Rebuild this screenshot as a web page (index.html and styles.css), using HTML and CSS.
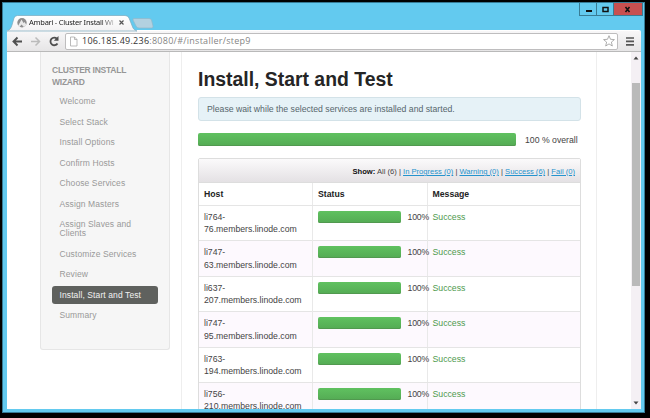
FILE: index.html
```html
<!DOCTYPE html>
<html lang="en">
<head>
<meta charset="utf-8">
<title>Ambari - Cluster Install Wizard</title>
<link rel="stylesheet" href="styles.css">
</head>
<body>
<div class="window">
  <header class="titlebar">
    <svg class="tab-shape" width="150" height="17" viewBox="0 0 150 17">
      <defs><linearGradient id="tab" x1="0" y1="0" x2="0" y2="1"><stop offset="0" stop-color="#fff"/><stop offset="1" stop-color="#f3f2f3"/></linearGradient></defs>
      <path d="M0 16C3 15 4 13 5 10L7 3Q8 .5 10.500 .5H118Q121 .5 122 3L126 13Q127 15 130 16Z" fill="url(#tab)" stroke="#79a9bd" stroke-width=".7"/>
      <path d="M127 3.500H142Q144 3.500 144.500 5L146 11Q146.500 13 144.500 13H132Q130 13 129 11L126 5Q125.500 3.500 127 3.500Z" fill="#b2d1e0" stroke="#8fb8ca" stroke-width=".7"/>
      <circle cx="15" cy="7.800" r="4.700" fill="#8d8d8d"/>
      <path d="M11 11L14.500 4.500L16.500 8L17.500 7L19.500 10L17 12L14.500 9.500L12.500 12Z" fill="#e9e9e9"/>
      <path d="M112.500 5.500L116.500 9.500M116.500 5.500L112.500 9.500" stroke="#555" stroke-width="1.200"/>
    </svg>
    <span class="tab-title">Ambari - Cluster Install Wi</span>
    <div class="controls">
      <span><svg width="17" height="13"><path d="M6 8H12" stroke="#111" stroke-width="2"/></svg></span>
      <span><svg width="17" height="13"><rect x="6" y="4.500" width="5" height="4" fill="none" stroke="#111" stroke-width="1.500"/></svg></span>
      <span class="close"><svg width="28" height="13"><path d="M11.500 4L15.500 9M15.500 4L11.500 9" stroke="#111" stroke-width="1.600"/></svg></span>
    </div>
  </header>
  <div class="toolbar">
    <svg class="nav" width="58" height="21" viewBox="0 0 58 21" fill="none">
      <path d="M15 10.500H7M10.500 6.500L6.500 10.500L10.500 14.500" stroke="#4f4f4f" stroke-width="1.900"/>
      <path d="M24 10.500H32M28.500 6.500L32.500 10.500L28.500 14.500" stroke="#bbb" stroke-width="1.500"/>
      <path d="M50 7.800A3.800 3.800 0 1 0 50.500 12.500" stroke="#4f4f4f" stroke-width="1.800"/>
      <path d="M51.500 5V9.700H46.800Z" fill="#4f4f4f"/>
    </svg>
    <div class="address">
      <svg width="8" height="11" viewBox="0 0 8 11"><path d="M.5 1H4.500L7 3.500V10H.5ZM4.500 1V3.500H7" fill="#fff" stroke="#aaa" stroke-width=".8"/></svg>
      <span class="url"><b>106.185.49.236</b>:8080/#/installer/step9</span>
      <svg width="12" height="12" viewBox="0 0 12 12"><path d="M6 .7L7.500 4.300L11.400 4.600L8.400 7.100L9.300 11L6 8.900L2.700 11L3.600 7.100L.6 4.600L4.500 4.300Z" fill="#fff" stroke="#999" stroke-width=".8"/></svg>
    </div>
    <svg class="burger" width="8" height="9"><path d="M0 1H8M0 4.400H8M0 7.800H8" stroke="#555" stroke-width="1.700"/></svg>
  </div>
  <div class="viewport">
    <div class="page">
      <nav class="sidebar">
        <h2>CLUSTER INSTALL<br>WIZARD</h2>
        <ul>
          <li>Welcome</li><li>Select Stack</li><li>Install Options</li><li>Confirm Hosts</li><li>Choose Services</li><li>Assign Masters</li><li>Assign Slaves and<br>Clients</li><li>Customize Services</li><li>Review</li><li class="active">Install, Start and Test</li><li>Summary</li>
        </ul>
      </nav>
      <main>
        <h1>Install, Start and Test</h1>
        <p class="info">Please wait while the selected services are installed and started.</p>
        <div class="overall"><div class="bar"></div><span>100 % overall</span></div>
        <section class="hosts">
          <div class="filter"><b>Show:</b> All (6) | <a>In Progress (0)</a> | <a>Warning (0)</a> | <a>Success (6)</a> | <a>Fail (0)</a></div>
          <div class="row head"><div>Host</div><div>Status</div><div>Message</div></div>
          <div class="row"><div>li764-<br>76.members.linode.com</div><div class="status"><i class="bar"></i><span>100%</span></div><div class="ok">Success</div></div>
          <div class="row odd"><div>li747-<br>63.members.linode.com</div><div class="status"><i class="bar"></i><span>100%</span></div><div class="ok">Success</div></div>
          <div class="row"><div>li637-<br>207.members.linode.com</div><div class="status"><i class="bar"></i><span>100%</span></div><div class="ok">Success</div></div>
          <div class="row odd"><div>li747-<br>95.members.linode.com</div><div class="status"><i class="bar"></i><span>100%</span></div><div class="ok">Success</div></div>
          <div class="row"><div>li763-<br>194.members.linode.com</div><div class="status"><i class="bar"></i><span>100%</span></div><div class="ok">Success</div></div>
          <div class="row odd"><div>li756-<br>210.members.linode.com</div><div class="status"><i class="bar"></i><span>100%</span></div><div class="ok">Success</div></div>
        </section>
      </main>
    </div>
    <div class="scrollbar">
      <svg width="6" height="4"><path d="M.5 3.500H5.500L3 .5Z" fill="#444"/></svg>
      <div class="thumb"></div>
      <svg width="6" height="4"><path d="M.5 .5H5.500L3 3.500Z" fill="#444"/></svg>
    </div>
  </div>
</div>
</body>
</html>
```
FILE: styles.css
```css
* { box-sizing: border-box; }
body { margin: 0; width: 650px; height: 418px; overflow: hidden; background: #000; font-family: "Liberation Sans", Arial, sans-serif; padding: 2px 5px 5px 2px; }
.window { width: 643px; height: 411px; background: #63caef; border: 1px solid #367b96; padding: 0 3px 3px 4px; }
.titlebar { height: 27px; position: relative; display: flex; justify-content: space-between; }
.tab-shape { margin-top: 12px; flex: none; }
.tab-title { position: absolute; left: 22px; top: 13px; white-space: nowrap; font: 7.500px/13px "Noto Sans", sans-serif; letter-spacing: -.25px; color: #222; -webkit-mask-image: linear-gradient(to right, #000 85%, rgba(0,0,0,.25)); mask-image: linear-gradient(to right, #000 85%, rgba(0,0,0,.25)); }
.controls { display: flex; height: 13px; margin-right: -2px; border: 1px solid #397c95; border-top: 0; }
.controls span { height: 12px; width: 17px; border-right: 1px solid #397c95; }
.controls .close { width: 28px; border: 0; background: #c75050; }
.controls svg { display: block; }
.toolbar { height: 22px; background: linear-gradient(#f8f7f8, #e6e5e6); border-top: 1px solid #fff; border-bottom: 1px solid #b9b9b9; display: flex; align-items: center; border-radius: 0 2px 0 0; }
.nav { flex: none; }
.address { width: 553px; height: 17px; border: 1px solid #bebdbe; border-radius: 2px; background: #fff; display: flex; align-items: center; padding: 0 2px 0 4px; gap: 4px; }
.url { flex: 1; font: 9px/14px "Open Sans", sans-serif; letter-spacing: .26px; color: #858585; }
.url b { color: #333; font-weight: 400; }
.burger { margin-left: 8px; }
.viewport { height: 357px; background: #fff; display: flex; overflow: hidden; }
.page { width: 624px; height: 357px; display: flex; align-items: flex-start; padding-left: 33px; }
.sidebar { width: 130px; height: 298px; background: #f6f6f6; border: 1px solid #e6e6e6; border-top: 0; border-radius: 0 0 3px 3px; padding: 12px 11px; color: #999; font-size: 8.500px; }
.sidebar h2 { margin: 0 0 3.900px; font-size: 8.500px; letter-spacing: -.24px; line-height: 12.300px; color: #969696; }
ul { list-style: none; margin: 0; padding: 0; }
li { padding: 4.800px 7.500px; margin-bottom: 2px; line-height: 8.900px; letter-spacing: .1px; white-space: nowrap; }
li.active { background: #5f615e; color: #f2f2f2; border-radius: 3px; }
main { margin-left: 11px; width: 416px; height: 357px; border: solid #eee; border-width: 0 1px; padding: 15px 15px 0 16px; font-size: 8.700px; color: #444; }
h1 { margin: 0; font-size: 19.400px; line-height: 24px; color: #252525; white-space: nowrap; }
.info { margin: 6px 0 12px; height: 24px; line-height: 23px; background: #e6f2f7; border: 1px solid #d3e2e8; border-radius: 3px; padding-left: 8px; color: #56666c; }
.overall { display: flex; align-items: center; gap: 9px; height: 13px; white-space: nowrap; }
.bar { display: block; height: 12px; border-radius: 2px; background: linear-gradient(#60c160, #54ab54); box-shadow: inset 0 -1px #51994f; }
.overall .bar { width: 318px; height: 12.500px; }
.hosts { margin-top: 12px; border: 1px solid #ddd; border-radius: 2px 2px 0 0; }
.filter { height: 24px; line-height: 25px; font-size: 7.600px; text-align: right; padding-right: 5px; white-space: nowrap; background: linear-gradient(#fbfafb, #e4e1e4); border-bottom: 1px solid #ddd; }
.filter b { color: #111; }
.filter a { color: #2593cd; text-decoration: underline; }
.row { display: grid; grid-template-columns: 114px 114.500px 1fr; height: 35.400px; border-bottom: 1px solid #e5e5e5; line-height: 12.400px; white-space: nowrap; }
.row > div { padding: 5px; border-right: 1px solid #e9e9e9; }
.row > div:last-child { border: 0; }
.row.head { height: 23px; font-weight: 700; color: #222; }
.odd { background: #fdf9fe; }
.status { display: flex; gap: 6.500px; }
.status .bar { width: 83px; flex: none; }
.status span { letter-spacing: -.15px; }
.ok { color: #4d9a4d; }
.scrollbar { width: 10px; background: #f4f0f4; display: flex; flex-direction: column; align-items: center; padding: 4px 0; }
.thumb { width: 8px; height: 203px; margin: 23px 0 auto; background: #bababa; }
```
